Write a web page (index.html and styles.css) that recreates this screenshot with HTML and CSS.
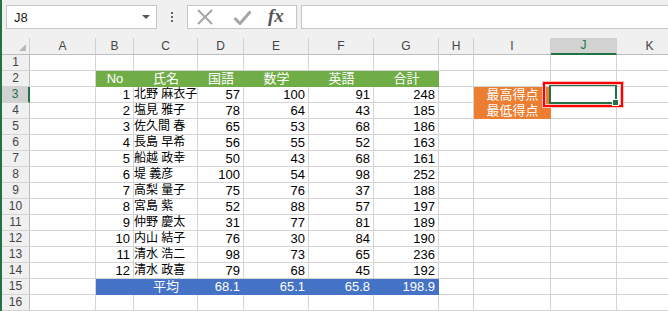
FILE: index.html
```html
<!DOCTYPE html>
<html>
<head>
    <title>Sheet1</title>
    <link rel="stylesheet" href="styles.css">
</head>
<body>
<div class="app">
    <div class="toolbar">
        <div class="namebox">
            <span>J8</span>
            <span class="arrow"></span>
        </div>
        <div class="grip"><i></i><i></i><i></i></div>
        <div class="fxbox">
            <svg width="18" height="16" viewBox="0 0 18 16"><path d="M2 1 L16 15 M16 1 L2 15" stroke="#a6a6a6" stroke-width="2" fill="none"/></svg>
            <svg width="19" height="15" viewBox="0 0 19 15"><path d="M1.5 8 L7 13.5 L17.5 1.5" stroke="#a6a6a6" stroke-width="3" fill="none"/></svg>
            <span class="fx">fx</span>
        </div>
        <div class="formula"></div>
    </div>

    <div class="sheet">
        <div class="row head">
            <div class="corner"><span class="tri"></span></div>
            <div>A</div><div>B</div><div>C</div><div>D</div><div>E</div><div>F</div><div>G</div><div>H</div><div>I</div><div class="sel">J</div><div>K</div>
        </div>
        <div class="row">
            <div class="rh">1</div>
            <div></div><div></div><div></div><div></div><div></div><div></div><div></div><div></div><div></div><div></div><div></div>
        </div>
        <div class="row">
            <div class="rh">2</div>
            <div></div>
            <div class="hd">No</div><div class="hd">氏名</div><div class="hd">国語</div><div class="hd">数学</div><div class="hd">英語</div><div class="hd">合計</div>
            <div></div><div></div><div></div><div></div>
        </div>
        <div class="row">
            <div class="rh sel">3</div>
            <div></div><div class="n">1</div><div class="nm">北野 麻衣子</div><div class="n">57</div><div class="n">100</div><div class="n">91</div><div class="n">248</div>
            <div></div><div class="org">最高得点</div>
            <div class="cur"><span class="mark"></span><span class="handle"></span></div>
            <div></div>
        </div>
        <div class="row">
            <div class="rh">4</div>
            <div></div><div class="n">2</div><div class="nm">塩見 雅子</div><div class="n">78</div><div class="n">64</div><div class="n">43</div><div class="n">185</div>
            <div></div><div class="org">最低得点</div><div></div><div></div>
        </div>
        <div class="row">
            <div class="rh">5</div>
            <div></div><div class="n">3</div><div class="nm">佐久間 春</div><div class="n">65</div><div class="n">53</div><div class="n">68</div><div class="n">186</div>
            <div></div><div></div><div></div><div></div>
        </div>
        <div class="row">
            <div class="rh">6</div>
            <div></div><div class="n">4</div><div class="nm">長島 早希</div><div class="n">56</div><div class="n">55</div><div class="n">52</div><div class="n">163</div>
            <div></div><div></div><div></div><div></div>
        </div>
        <div class="row">
            <div class="rh">7</div>
            <div></div><div class="n">5</div><div class="nm">船越 政幸</div><div class="n">50</div><div class="n">43</div><div class="n">68</div><div class="n">161</div>
            <div></div><div></div><div></div><div></div>
        </div>
        <div class="row">
            <div class="rh">8</div>
            <div></div><div class="n">6</div><div class="nm">堤 義彦</div><div class="n">100</div><div class="n">54</div><div class="n">98</div><div class="n">252</div>
            <div></div><div></div><div></div><div></div>
        </div>
        <div class="row">
            <div class="rh">9</div>
            <div></div><div class="n">7</div><div class="nm">高梨 量子</div><div class="n">75</div><div class="n">76</div><div class="n">37</div><div class="n">188</div>
            <div></div><div></div><div></div><div></div>
        </div>
        <div class="row">
            <div class="rh">10</div>
            <div></div><div class="n">8</div><div class="nm">宮島 紫</div><div class="n">52</div><div class="n">88</div><div class="n">57</div><div class="n">197</div>
            <div></div><div></div><div></div><div></div>
        </div>
        <div class="row">
            <div class="rh">11</div>
            <div></div><div class="n">9</div><div class="nm">仲野 慶太</div><div class="n">31</div><div class="n">77</div><div class="n">81</div><div class="n">189</div>
            <div></div><div></div><div></div><div></div>
        </div>
        <div class="row">
            <div class="rh">12</div>
            <div></div><div class="n">10</div><div class="nm">内山 結子</div><div class="n">76</div><div class="n">30</div><div class="n">84</div><div class="n">190</div>
            <div></div><div></div><div></div><div></div>
        </div>
        <div class="row">
            <div class="rh">13</div>
            <div></div><div class="n">11</div><div class="nm">清水 浩二</div><div class="n">98</div><div class="n">73</div><div class="n">65</div><div class="n">236</div>
            <div></div><div></div><div></div><div></div>
        </div>
        <div class="row">
            <div class="rh">14</div>
            <div></div><div class="n">12</div><div class="nm">清水 政喜</div><div class="n">79</div><div class="n">68</div><div class="n">45</div><div class="n">192</div>
            <div></div><div></div><div></div><div></div>
        </div>
        <div class="row">
            <div class="rh">15</div>
            <div></div>
            <div class="avg"></div><div class="avg ctr">平均</div><div class="avg n">68.1</div><div class="avg n">65.1</div><div class="avg n">65.8</div><div class="avg n">198.9</div>
            <div></div><div></div><div></div><div></div>
        </div>
        <div class="row">
            <div class="rh">16</div>
            <div></div><div></div><div></div><div></div><div></div><div></div><div></div><div></div><div></div><div></div><div></div>
        </div>
    </div>
</div>
</body>
</html>
```

FILE: styles.css
```css
body {
    margin: 0;
    font-family: "Liberation Sans", "Noto Sans CJK JP", sans-serif;
    background: #fff;
}
.app {
    width: 666px;
    height: 311px;
    border-left: 2px solid #217346;
    overflow: hidden;
    background: #f0f0f0;
}

/* formula bar */
.toolbar {
    display: flex;
    align-items: flex-start;
    height: 38px;
    padding: 5px 0 0 4px;
    box-sizing: border-box;
}
.namebox {
    width: 151px;
    height: 24px;
    box-sizing: border-box;
    border: 1px solid #c6c6c6;
    background: #fff;
    display: flex;
    align-items: center;
    justify-content: space-between;
    padding: 0 6px 0 7px;
    font-size: 13px;
    color: #222;
}
.arrow {
    width: 0;
    height: 0;
    border-left: 4px solid transparent;
    border-right: 4px solid transparent;
    border-top: 4px solid #555;
}
.grip {
    width: 30px;
    height: 24px;
    display: flex;
    flex-direction: column;
    align-items: center;
    justify-content: center;
    gap: 2px;
}
.grip i {
    width: 2px;
    height: 2px;
    background: #666;
}
.fxbox {
    width: 110px;
    height: 24px;
    box-sizing: border-box;
    border: 1px solid #c6c6c6;
    background: #fff;
    display: flex;
    align-items: center;
    padding-left: 8px;
    gap: 19px;
}
.fx {
    font-family: "Liberation Serif", serif;
    font-style: italic;
    font-weight: bold;
    font-size: 19px;
    color: #555;
    margin-left: -3px;
    margin-top: -3px;
}
.formula {
    flex: 1;
    height: 24px;
    margin-left: 4px;
    box-sizing: border-box;
    border: 1px solid #c6c6c6;
    border-right: none;
    background: #fff;
}

/* grid */
.row {
    display: grid;
    grid-template-columns: 28px 66px 38px 64px 46px 65px 65px 65px 35px 77px 66px 66px;
    height: 16px;
    background: #fff;
}
.row > div {
    box-sizing: border-box;
    border-right: 1px solid #d4d4d4;
    border-bottom: 1px solid #d4d4d4;
    font-size: 13px;
    line-height: 15px;
    white-space: nowrap;
    overflow: hidden;
    padding-left: 1px;
}
.row.head {
    height: 17px;
    background: #f0f0f0;
}
.row.head > div {
    text-align: center;
    font-size: 12px;
    line-height: 16px;
    color: #444;
    border-right-color: #d0d0d0;
    border-bottom-color: #bdbdbd;
    padding: 0;
}
.row.head > .sel {
    background: #d2d2d2;
    color: #217346;
    border-bottom: 2px solid #217346;
    line-height: 15px;
}
.corner {
    position: relative;
}
.tri {
    position: absolute;
    right: 3px;
    bottom: 3px;
    width: 0;
    height: 0;
    border-left: 7px solid transparent;
    border-bottom: 7px solid #b9b9b9;
}
.row > .rh {
    background: #f0f0f0;
    text-align: center;
    font-size: 12px;
    color: #444;
    border-right-color: #bdbdbd;
    padding: 0;
}
.row > .rh.sel {
    background: #d2d2d2;
    color: #217346;
    border-right: 2px solid #217346;
}
.row > .nm {
    font-size: 12px;
    padding-left: 0;
}
.row > .n {
    text-align: right;
    padding: 0 3px 0 0;
}
.row > .ctr {
    text-align: center;
}
.row > .hd {
    background: #70ad47;
    border-color: #70ad47;
    color: #fff;
    text-align: center;
}
.row > .avg {
    background: #4472c4;
    border-color: #4472c4;
    color: #fff;
}
.row > .org {
    background: #ed7d31;
    border-color: #ed7d31;
    color: #fff;
    text-align: center;
}

/* active cell J3 */
.row > .cur {
    position: relative;
    overflow: visible;
    z-index: 2;
}
.cur::before {
    content: "";
    position: absolute;
    left: -2px;
    top: -3px;
    width: 68px;
    height: 20px;
    box-sizing: border-box;
    border: 2px solid #217346;
}
.handle {
    position: absolute;
    left: 62px;
    top: 13px;
    width: 5px;
    height: 5px;
    background: #217346;
    outline: 1px solid #fff;
}
.mark {
    position: absolute;
    left: -8px;
    top: -5px;
    width: 80px;
    height: 25px;
    box-sizing: border-box;
    border: 2px solid #f00;
    box-shadow: 0 0 0 1px #f7c4c4, inset 0 0 0 1px #f7c4c4;
}
```
